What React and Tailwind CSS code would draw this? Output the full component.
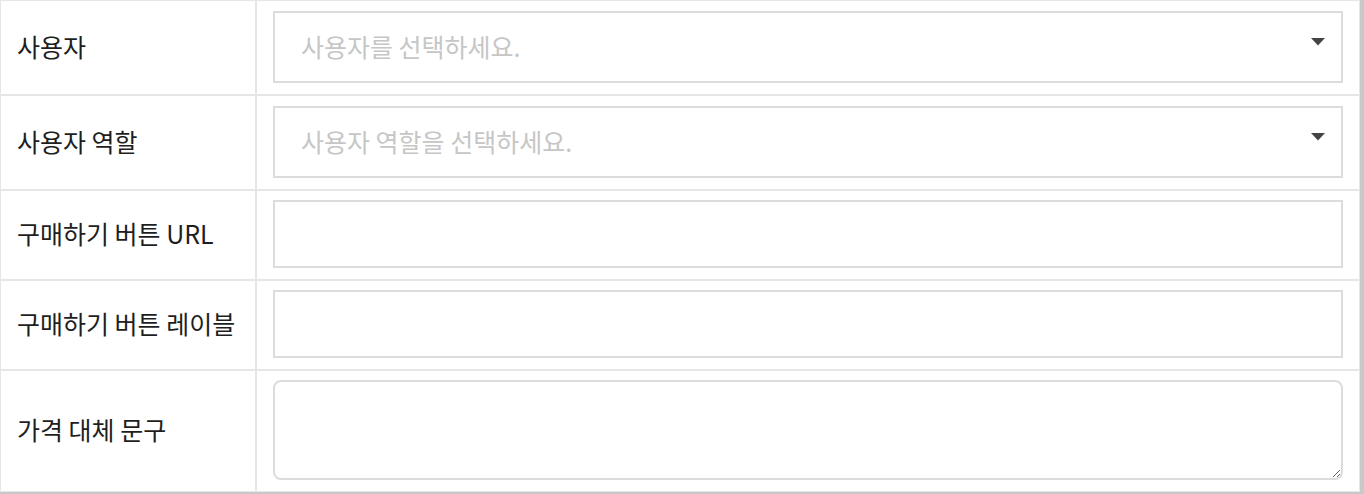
import React from 'react';

const rows = [
  { label: '사용자', type: 'select', placeholder: '사용자를 선택하세요.', h: 'h-[95px]' },
  { label: '사용자 역할', type: 'select', placeholder: '사용자 역할을 선택하세요.', h: 'h-[95px]' },
  { label: '구매하기 버튼 URL', type: 'input', h: 'h-[90px]' },
  { label: '구매하기 버튼 레이블', type: 'input', h: 'h-[90px]' },
  { label: '가격 대체 문구', type: 'textarea', h: 'h-[122px]' },
];

const Caret = () => (
  <svg width="14" height="8" viewBox="0 0 14 8" className="mb-[10px] shrink-0">
    <path d="M0 0h14L7 7.5z" fill="#444" />
  </svg>
);

const Field = ({ row }) => {
  if (row.type === 'select') {
    return (
      <div className="flex h-[72px] items-center justify-between border-2 border-[#dcdcdc] bg-white pl-[26px] pr-[16px]">
        <span className="text-[25px] text-[#c6c6c6]">{row.placeholder}</span>
        <Caret />
      </div>
    );
  }
  if (row.type === 'textarea') {
    return (
      <textarea className="block h-[100px] w-full rounded-lg border-2 border-[#dcdcdc] bg-white px-[26px] py-3 text-[25px] outline-none" />
    );
  }
  return (
    <input
      type="text"
      className="block h-[68px] w-full border-2 border-[#dcdcdc] bg-white px-[26px] text-[25px] outline-none"
    />
  );
};

export default function App() {
  return (
    <div
      className="w-[1364px] h-[494px] overflow-hidden bg-white"
      style={{ fontFamily: '"Noto Sans CJK KR", "Noto Sans", sans-serif' }}
    >
      <div className="w-[1364px] border-r-4 border-b-2 border-[#c8c8c8]">
        <table className="w-[1360px] table-fixed border-separate border-spacing-0">
          <colgroup>
            <col className="w-[256px]" />
            <col />
          </colgroup>
          <tbody>
            {rows.map((row) => (
              <tr key={row.label} className={row.h}>
                <td className="border border-[#e6e6e6] px-4 pb-[2px] align-middle text-[25px] text-[#1e1e1e]">
                  {row.label}
                </td>
                <td className="border border-[#e6e6e6] px-4 pb-[2px] align-middle">
                  <Field row={row} />
                </td>
              </tr>
            ))}
          </tbody>
        </table>
      </div>
    </div>
  );
}
